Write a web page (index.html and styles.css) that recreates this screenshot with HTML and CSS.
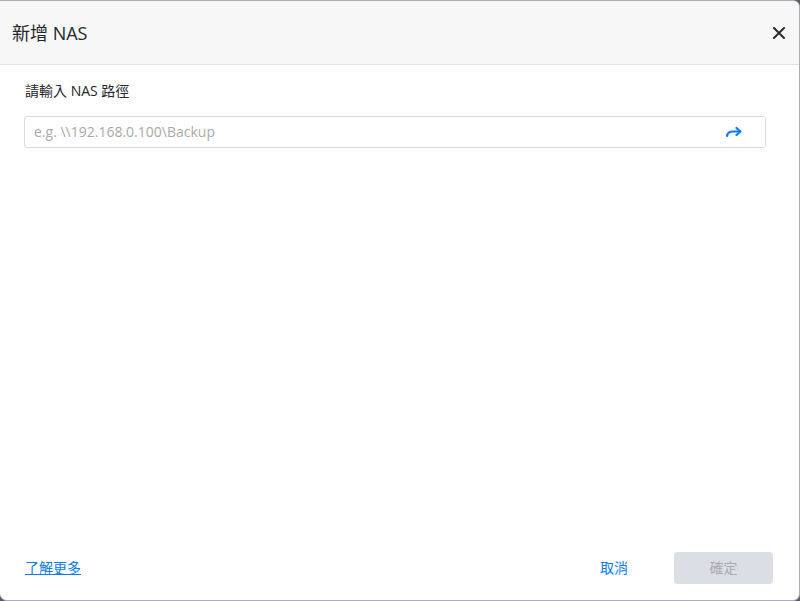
FILE: index.html
```html
<!DOCTYPE html>
<html lang="zh-Hant">
<head>
<meta charset="utf-8">
<link rel="stylesheet" href="styles.css">
</head>
<body>
<div class="dialog">
  <div class="header">
    <div class="title">新增 NAS</div>
    <button class="close" aria-label="close">
      <svg width="12" height="12" viewBox="0 0 12 12"><path d="M1 1L11 11M11 1L1 11" stroke="#2b2d33" stroke-width="2" stroke-linecap="square"/></svg>
    </button>
  </div>
  <div class="content">
    <div class="label">請輸入 NAS 路徑</div>
    <div class="field">
      <input class="input" type="text" placeholder="e.g. \\192.168.0.100\Backup">
      <svg class="go" width="18" height="12" viewBox="0 0 18 12"><path d="M2 10C2.5 6.5 5 5.5 8 5.5H15" fill="none" stroke="#0a7cf0" stroke-width="2.2" stroke-linecap="round"/><path d="M11.5 2L15.5 5.5L11.5 9" fill="none" stroke="#0a7cf0" stroke-width="2.2" stroke-linecap="round" stroke-linejoin="round"/></svg>
    </div>
  </div>
  <div class="footer">
    <a class="more" href="#">了解更多</a>
    <div class="actions">
      <button class="cancel">取消</button>
      <button class="ok" disabled>確定</button>
    </div>
  </div>
</div>
</body>
</html>
```
FILE: styles.css
```css
html, body {
  margin: 0;
  padding: 0;
  background: #5a5d66;
}
body {
  font-family: "Open Sans", "Noto Sans CJK TC", sans-serif;
  width: 800px;
  height: 601px;
  overflow: hidden;
}
.dialog {
  box-sizing: border-box;
  width: 800px;
  height: 601px;
  background: #ffffff;
  border: 1px solid #a9aeb8;
  border-left: none;
  border-radius: 0 7px 7px 7px;
  display: flex;
  flex-direction: column;
  overflow: hidden;
}
.header {
  height: 63px;
  flex: none;
  background: #f7f7f7;
  border-bottom: 1px solid #e1e1e1;
  display: flex;
  align-items: center;
  justify-content: space-between;
  padding: 0 14px 0 12px;
}
.title {
  font-size: 18px;
  color: #25272d;
  padding-bottom: 2px;
}
.close {
  border: none;
  background: transparent;
  padding: 0;
  width: 12px;
  height: 12px;
  display: flex;
  cursor: pointer;
}
.content {
  flex: 1;
  padding: 16px 33px 0 24px;
}
.label {
  font-size: 14px;
  color: #25272d;
  padding-left: 1px;
  line-height: 20px;
}
.field {
  margin-top: 15px;
  height: 32px;
  box-sizing: border-box;
  border: 1px solid #dcdcdc;
  border-radius: 3px;
  display: flex;
  align-items: center;
  padding: 0 22px 0 9px;
}
.input {
  flex: 1;
  border: none;
  outline: none;
  font-family: inherit;
  font-size: 14px;
  color: #25272d;
  padding: 0 0 1px 0;
  background: transparent;
}
.input::placeholder {
  color: #a9a9a9;
}
.go {
  flex: none;
  margin-top: -1px;
}
.footer {
  flex: none;
  height: 48px;
  display: flex;
  align-items: flex-start;
  justify-content: space-between;
  padding: 0 25px 0 25px;
}
.more {
  font-family: "Noto Sans CJK TC", sans-serif;
  font-size: 14px;
  color: #0a7cf0;
  margin-top: 5px;
  line-height: 20px;
}
.actions {
  display: flex;
  gap: 46px;
  align-items: center;
}
.cancel {
  border: none;
  background: transparent;
  font-family: "Noto Sans CJK TC", sans-serif;
  font-size: 14px;
  color: #0a7cf0;
  padding: 0 0 2px 0;
  height: 32px;
}
.ok {
  width: 99px;
  height: 32px;
  border: none;
  border-radius: 4px;
  background: #dbdee4;
  color: #a8aab0;
  font-family: "Noto Sans CJK TC", sans-serif;
  font-size: 14px;
  padding: 0 0 2px 0;
  margin-right: 1px;
}
```
